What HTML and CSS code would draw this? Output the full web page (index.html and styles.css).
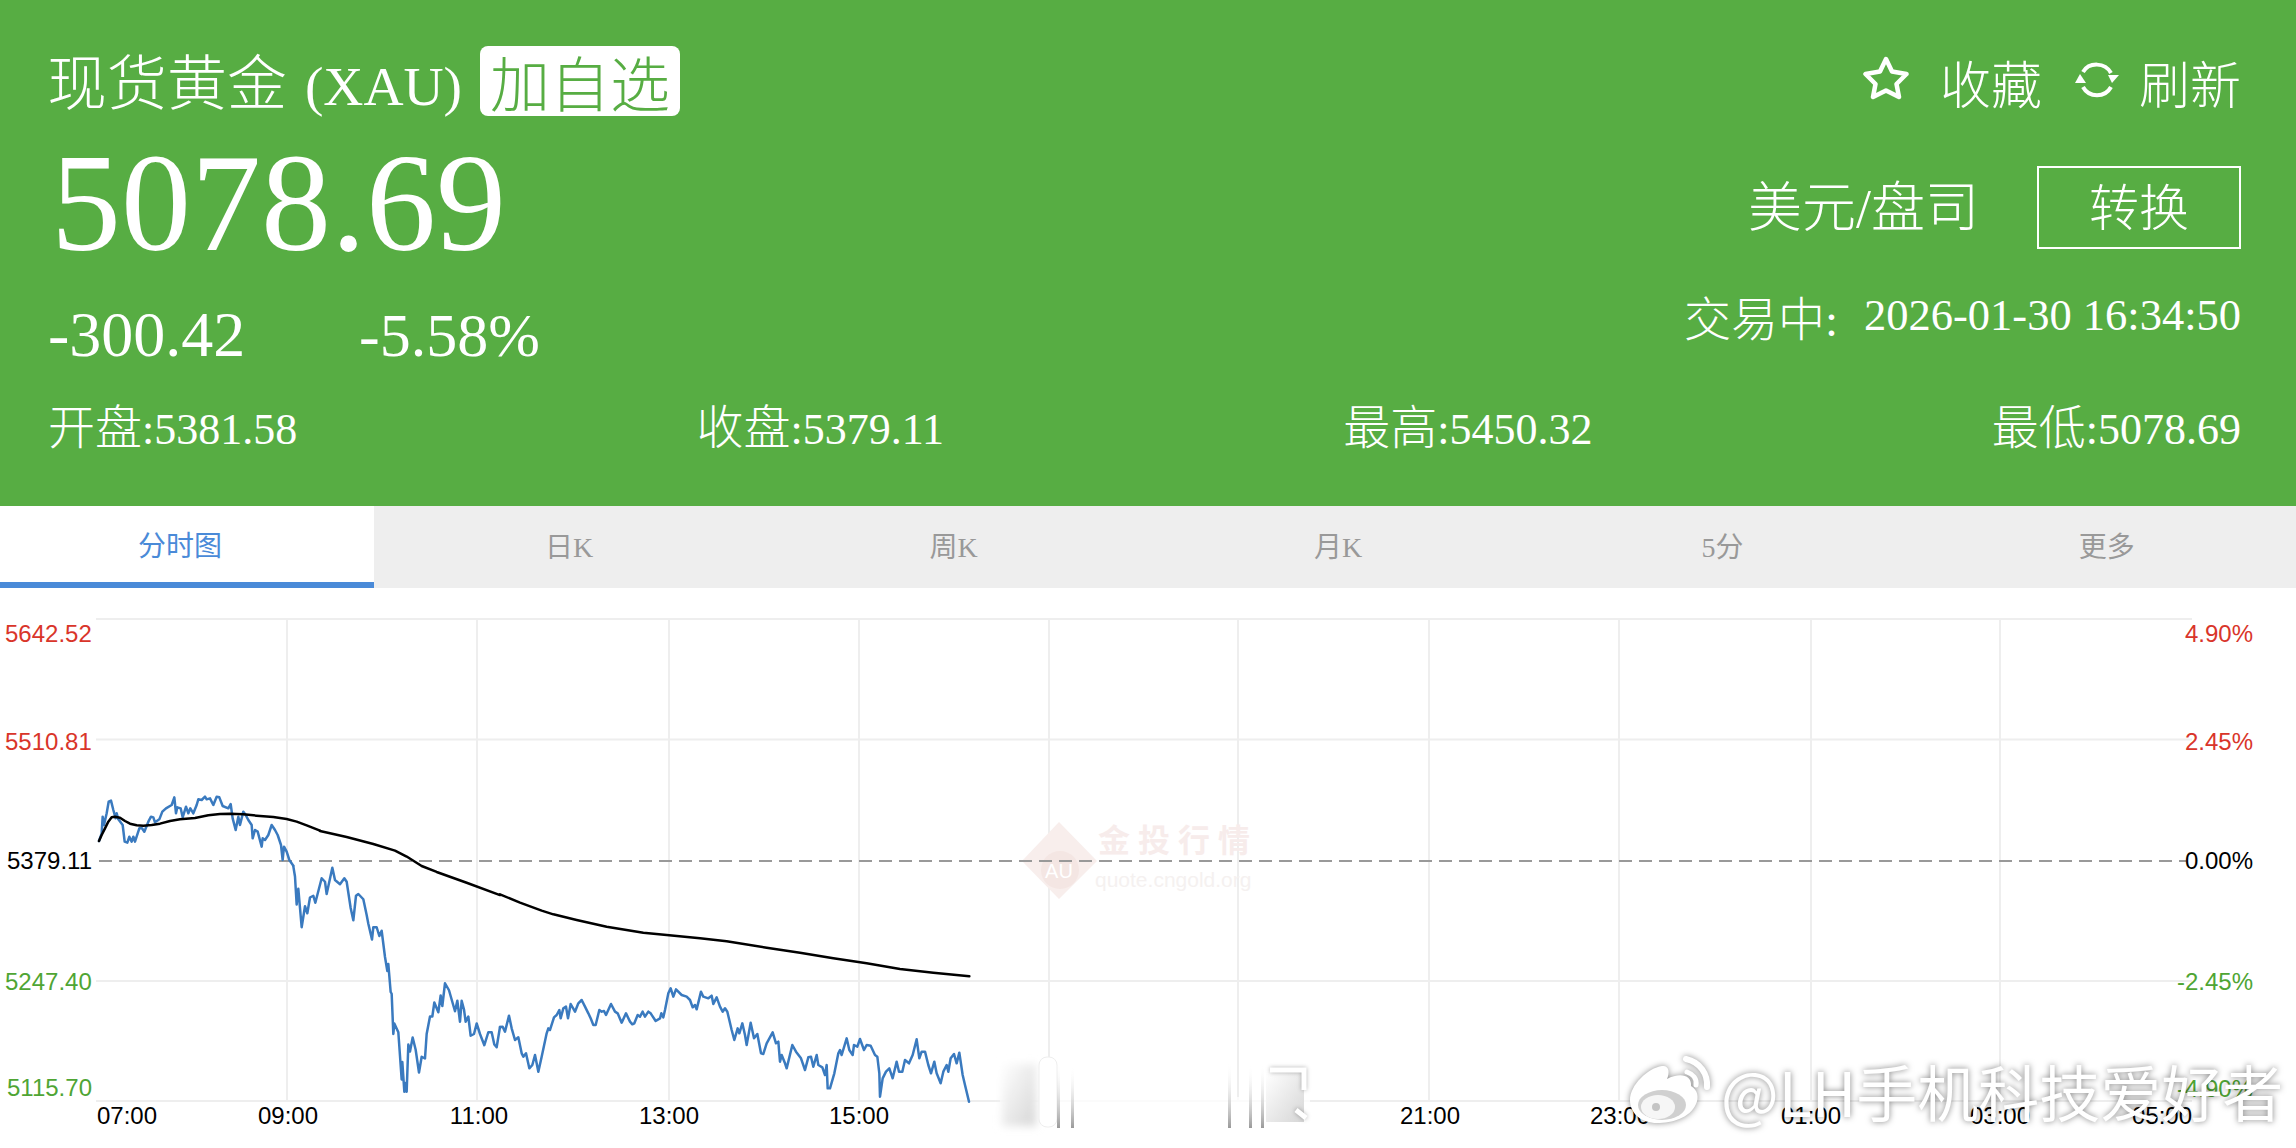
FILE: index.html
```html
<!DOCTYPE html>
<html lang="zh-CN">
<head>
<meta charset="utf-8">
<title>现货黄金 (XAU)</title>
<link rel="stylesheet" href="styles.css">
</head>
<body>
<header class="quote">
  <div class="quote-top">
    <div class="quote-left">
      <div class="title-row">
        <h1 class="title"><span class="zh">现货黄金</span> (XAU)</h1>
        <button class="add-btn">加自选</button>
      </div>
      <div class="price">5078.69</div>
      <div class="change"><span class="change-abs">-300.42</span><span>-5.58%</span></div>
    </div>
    <div class="quote-right">
      <div class="actions">
        <svg class="icon-star" width="48" height="44" viewBox="0 0 48 44"><path d="M24 3 L30 15.500 L44.500 18 L34.500 28 L37 41 L24 34.500 L11 41 L13.500 28 L3.500 18 L18 15.500 Z"/></svg>
        <span class="action-text">收藏</span>
        <svg class="icon-refresh" width="44" height="40" viewBox="0 0 44 40"><path class="arc" d="M8 12 C14 2 30 2 36 13"/><path class="arc" d="M36 27 C30 38 14 38 8 27"/><path class="head" d="M33 15 L44 15 L37 23 Z"/><path class="head" d="M0 23 L11 23 L5 14 Z"/></svg>
        <span class="action-text refresh-text">刷新</span>
      </div>
      <div class="unit-row">
        <span class="unit">美元/盘司</span>
        <button class="convert-btn">转换</button>
      </div>
      <div class="status"><span class="status-zh">交易中:</span><span>2026-01-30 16:34:50</span></div>
    </div>
  </div>
  <div class="stats">
    <div class="stat"><span class="zh">开盘</span>:5381.58</div>
    <div class="stat"><span class="zh">收盘</span>:5379.11</div>
    <div class="stat"><span class="zh">最高</span>:5450.32</div>
    <div class="stat"><span class="zh">最低</span>:5078.69</div>
  </div>
</header>

<nav class="tabs">
  <div class="tab tab-active">分时图</div>
  <div class="tab">日K</div>
  <div class="tab">周K</div>
  <div class="tab">月K</div>
  <div class="tab">5分</div>
  <div class="tab">更多</div>
</nav>

<section class="chart">
<svg class="chart-svg" width="2296" height="560" viewBox="0 588 2296 560">
  <defs>
    <linearGradient id="smearUp" x1="0" y1="0" x2="0" y2="1"><stop offset="0" stop-color="#fff" stop-opacity="0"/><stop offset="1" stop-color="#9a9a9a"/></linearGradient>
    <linearGradient id="smearBlob" x1="0" y1="0" x2="1" y2="1"><stop offset="0" stop-color="#fff"/><stop offset="1" stop-color="#d6d6d6"/></linearGradient>
    <filter id="soft" x="-30%" y="-30%" width="160%" height="160%"><feGaussianBlur stdDeviation="4"/></filter>
  </defs>

  <path class="grid" d="M96 619H2192M96 739.500H2192M96 981H2192M96 1101H2192"/>
  <path class="grid" d="M287 619V1101M477 619V1101M669 619V1101M859 619V1101M1049 619V1101M1238 619V1101M1429 619V1101M1619 619V1101M1811 619V1101M2000 619V1101"/>

  <g class="mark">
    <path class="mark-diamond" d="M1059 822 L1097 861 L1059 899 L1022 861 Z"/>
    <circle class="mark-circle" cx="1060" cy="870" r="19"/>
    <text class="mark-au" x="1059" y="878" text-anchor="middle">AU</text>
    <text class="mark-zh" x="1098" y="852">金投行情</text>
    <text class="mark-url" x="1095" y="887">quote.cngold.org</text>
  </g>

  <path class="dash" d="M99 861H2186"/>

  <text class="axis red" x="5" y="642">5642.52</text>
  <text class="axis red" x="5" y="750">5510.81</text>
  <text class="axis black" x="7" y="869">5379.11</text>
  <text class="axis green" x="5" y="990">5247.40</text>
  <text class="axis green" x="7" y="1096">5115.70</text>

  <text class="axis red end" x="2253" y="642">4.90%</text>
  <text class="axis red end" x="2253" y="750">2.45%</text>
  <text class="axis black end" x="2253" y="869">0.00%</text>
  <text class="axis green end" x="2253" y="990">-2.45%</text>
  <text class="axis green end" x="2253" y="1097">-4.90%</text>

  <text class="axis black mid" x="127" y="1124">07:00</text>
  <text class="axis black mid" x="288" y="1124">09:00</text>
  <text class="axis black mid" x="479" y="1124">11:00</text>
  <text class="axis black mid" x="669" y="1124">13:00</text>
  <text class="axis black mid" x="859" y="1124">15:00</text>
  <text class="axis black mid" x="1430" y="1124">21:00</text>
  <text class="axis black mid" x="1620" y="1124">23:00</text>
  <text class="axis black mid" x="1811" y="1124">01:00</text>
  <text class="axis black mid" x="2000" y="1124">03:00</text>
  <text class="axis black mid" x="2162" y="1124">05:00</text>

  <g transform="translate(80,780) scale(.33333)">
    <polyline class="line-blue" points="57,183 65,160 68,110 72,135 80,100 86,65 93,62 100,90 107,115 110,100 115,118 128,135 134,185 142,188 148,170 155,185 160,170 165,185 178,145 186,145 193,155 205,125 213,110 220,112 225,127 238,118 247,95 258,85 275,75 283,52 288,100 292,82 302,85 308,112 318,80 325,100 331,85 340,100 350,75 355,58 365,60 375,50 380,58 390,55 400,75 410,50 418,52 428,78 445,85 452,72 458,115 467,150 475,110 480,135 490,95 497,105 505,120 515,135 518,175 525,150 533,155 545,200 548,175 555,180 565,165 575,135 585,150 593,165 603,195 608,240 612,200 620,215 628,240 640,257"/>
  </g>
  <g transform="translate(0,600) scale(.33333,.35)">
    <polyline class="line-blue" points="880,761 885,790 890,870 895,825 905,935 915,875 922,895 930,850 940,845 946,865 965,795 975,805 980,840 997,765 1005,800 1020,812 1033,795 1040,805 1052,880 1060,915 1068,845 1075,840 1090,855 1100,900 1105,925 1116,970 1120,935 1130,935 1138,960 1145,945 1155,1020 1162,1060 1165,1040 1172,1120 1175,1125 1180,1240 1183,1210 1195,1235 1205,1370 1207,1320 1213,1405 1217,1380 1220,1405 1225,1270 1230,1290 1238,1250 1247,1285 1257,1350 1265,1305 1275,1310 1280,1240 1290,1190 1297,1190 1303,1150 1315,1178 1322,1130 1327,1160 1335,1095 1347,1115 1365,1175 1372,1145 1380,1205 1385,1145 1392,1170 1397,1205 1405,1190 1412,1245 1422,1240 1430,1210 1440,1240 1453,1272 1465,1235 1475,1235 1483,1270 1490,1278 1500,1220"/>
  </g>
  <g transform="translate(500,780) scale(.33333)">
    <polyline class="line-blue" points="0,741 8,740 15,755 27,707 35,745 45,780 55,772 65,820 70,830 78,820 88,865 97,855 105,825 110,850 115,875 125,830 140,760 145,745 150,750 162,712 170,705 178,690 182,715 190,685 198,680 204,715 212,672 225,695 235,670 245,660 255,680 265,700 272,715 280,735 287,735 298,690 305,695 312,693 318,705 333,672 345,695 353,700 365,728 378,700 390,725 397,733 403,730 413,705 420,710 428,695 435,710 445,695 452,700 467,723 480,715 484,700 490,712 495,690 505,640 512,625 520,650 528,628 545,645 560,650 570,660 578,682 585,675 590,688 603,635 610,650 625,655 635,647 640,672 650,652 660,680 668,695 675,685 682,695 695,750 703,780 713,745 718,760 727,730 735,765 740,795 752,728 762,775 772,762 783,820 790,822 800,790 818,757 828,790 835,785 840,845 845,825 855,850 860,865 877,795 888,815 903,835 915,870 925,832 933,830 940,860 950,825 955,855 967,862 975,885 980,855 983,925 990,925 1003,880 1015,820 1020,810 1025,825 1040,775 1048,810 1058,825 1062,795 1072,800 1080,777 1092,810 1100,795 1112,797 1125,825 1132,830 1138,880 1140,950 1148,895 1158,875 1168,865 1178,895 1190,845 1197,875 1207,875 1215,840 1227,850 1238,825 1250,778 1258,835 1265,815 1275,815 1285,855 1293,880 1303,845 1310,880 1322,910 1330,875 1340,855 1345,875 1352,835 1362,822 1370,850 1378,818 1388,885 1395,915 1407,965"/>
  </g>

  <g transform="translate(80,780) scale(.33333)">
    <polyline class="line-black" points="57,183 65,165 75,145 85,125 95,112 105,110 120,113 135,123 150,131 170,136 190,137 215,135 240,131 270,123 300,118 345,114 385,106 420,102 450,101 490,103 530,107 580,111 620,117 650,125 680,136 720,152"/>
  </g>
  <g transform="translate(0,600) scale(.33333,.35)">
    <polyline class="line-black" points="960,660 1040,677 1120,697 1185,716 1220,733 1265,760 1310,777 1400,808 1500,843"/>
  </g>
  <g transform="translate(500,780) scale(.33333)">
    <polyline class="line-black" points="0,343 60,368 125,392 160,403 230,420 320,440 430,458 500,465 600,475 680,484 800,503 900,518 1000,535 1100,550 1200,567 1300,578 1408,589"/>
  </g>

  <g class="smear">
    <rect class="smear-wash" x="1000" y="1097" width="310" height="8"/>
    <rect x="1002" y="1064" width="34" height="62" fill="url(#smearBlob)" filter="url(#soft)"/>
    <rect class="smear-white" x="1039" y="1057" width="18" height="70" rx="8"/>
    <rect x="1057" y="1062" width="3" height="66" fill="url(#smearUp)"/>
    <rect x="1071" y="1066" width="3" height="62" fill="url(#smearUp)"/>
    <rect x="1228" y="1062" width="3" height="66" fill="url(#smearUp)"/>
    <rect x="1249" y="1064" width="3" height="64" fill="url(#smearUp)"/>
    <rect x="1261" y="1064" width="3" height="64" fill="url(#smearUp)"/>
    <rect x="1266" y="1072" width="38" height="50" fill="url(#smearBlob)"/>
    <path class="smear-stroke" d="M1270 1070H1304V1090M1296 1110L1306 1118"/>
  </g>

  <g class="weibo">
    <path class="weibo-body" d="M1630 1100 C1630 1085 1648 1068 1662 1066 C1669 1065 1670 1072 1667 1079 C1680 1072 1692 1075 1691 1086 C1698 1090 1699 1098 1696 1104 C1690 1118 1672 1123 1657 1123 C1642 1123 1630 1114 1630 1100 Z"/>
    <ellipse class="weibo-eye" cx="1662" cy="1105" rx="24" ry="15"/>
    <ellipse class="weibo-eye-in" cx="1658" cy="1107" rx="17" ry="12"/>
    <circle class="weibo-pupil" cx="1656" cy="1107" r="4"/>
    <path class="weibo-arc" d="M1686 1059 C1700 1062 1708 1074 1707 1087"/>
    <path class="weibo-arc-in" d="M1687 1072 C1693 1074 1697 1079 1696 1085"/>
  </g>
  <text class="weibo-text" x="1721" y="1117">@LH手机科技爱好者</text>
</svg>
</section>
</body>
</html>
```
FILE: styles.css
```css
* { box-sizing: border-box; }
html, body { margin: 0; padding: 0; }
body {
  width: 2296px;
  height: 1148px;
  overflow: hidden;
  background: #fff;
  font-family: "Liberation Serif", "Noto Sans CJK SC", serif;
}

/* header */
.quote {
  height: 506px;
  background: #57ad43;
  color: #fff;
  padding: 46px 55px 0 50px;
}
.quote-top { display: flex; justify-content: space-between; }
.title-row { display: flex; align-items: center; height: 70px; }
.title {
  margin: 10px 0 0 -3px;
  font-size: 55.500px;
  font-weight: 400;
  line-height: 70px;
  white-space: nowrap;
}
.zh { font-weight: 300; }
.title .zh { font-size: 60px; margin-right: 4px; }
.add-btn {
  width: 200px;
  height: 70px;
  margin-left: 18px;
  padding: 0;
  border: 0;
  border-radius: 8px;
  background: #fff;
  color: #57ad43;
  font-family: "Noto Sans CJK SC", sans-serif;
  font-size: 60px;
  font-weight: 300;
  line-height: 70px;
}
.price {
  margin-top: 17px;
  margin-left: 1px;
  height: 140px;
  font-size: 140px;
  line-height: 140px;
}
.change {
  display: flex;
  align-items: center;
  margin-top: 27px;
  margin-left: -2px;
  font-size: 62px;
  line-height: 70px;
}
.change-abs { width: 311px; font-size: 64px; }

.quote-right { display: flex; flex-direction: column; align-items: flex-end; }
.actions { display: flex; align-items: center; height: 70px; margin-top: 1px; font-size: 51px; font-family: "Noto Sans CJK SC", sans-serif; font-weight: 300; }
.icon-star { fill: none; stroke: #fff; stroke-width: 4.500; stroke-linejoin: round; margin-right: 30px; margin-top: -8px; }
.icon-refresh { margin: -5px 20px 0 33px; }
.icon-refresh .arc { fill: none; stroke: #fff; stroke-width: 4; }
.icon-refresh .head { fill: #fff; }
.unit-row { display: flex; align-items: center; height: 83px; margin-top: 49px; }
.unit { font-size: 54px; font-weight: 300; margin-right: 58px; padding-bottom: 8px; }
.convert-btn {
  width: 204px;
  height: 83px;
  padding: 0 0 8px;
  border: 2px solid #fff;
  background: transparent;
  color: #fff;
  font-family: "Noto Sans CJK SC", sans-serif;
  font-size: 50px;
  font-weight: 300;
}
.status { display: flex; align-items: center; height: 60px; margin-top: 36px; font-size: 44.500px; }
.status-zh { font-size: 47px; font-weight: 300; margin-right: 26px; }

.stats {
  display: flex;
  justify-content: space-between;
  margin-top: 28px;
  margin-left: -2px;
  font-size: 44px;
  line-height: 60px;
}
.stats .zh { font-size: 47px; }

/* tabs */
.tabs { display: grid; grid-template-columns: 374px repeat(5, 1fr); height: 82px; background: #eee; }
.tab {
  display: flex;
  align-items: center;
  justify-content: center;
  padding-left: 6px;
  padding-bottom: 4px;
  color: #999;
  font-size: 28px;
}
.tab-active {
  padding-left: 0;
  padding-right: 14px;
  background: #fff;
  border-bottom: 6px solid #4a8ad8;
  padding-bottom: 0;
  color: #4a8ad8;
}

/* chart */
.chart { height: 560px; }
.chart-svg { display: block; }
.grid { fill: none; stroke: #eee; stroke-width: 2; }
.dash { fill: none; stroke: #999; stroke-width: 2; stroke-dasharray: 13 7; }
.axis { font-family: "Liberation Sans", sans-serif; font-size: 24px; }
.end { text-anchor: end; }
.mid { text-anchor: middle; }
.red { fill: #d9352a; }
.green { fill: #4fa534; }
.black { fill: #000; }
.line-blue { fill: none; stroke: #3a7abf; stroke-width: 2.500; stroke-linejoin: round; stroke-linecap: round; vector-effect: non-scaling-stroke; }
.line-black { fill: none; stroke: #000; stroke-width: 2.500; stroke-linejoin: round; stroke-linecap: round; vector-effect: non-scaling-stroke; }

.mark-diamond { fill: #f8eeec; }
.mark-circle { fill: #f4e6e3; }
.mark-au { fill: #fff; font-family: "Liberation Sans", sans-serif; font-size: 20px; }
.mark-zh { fill: #f7eceb; font-family: "Noto Sans CJK SC", sans-serif; font-size: 32px; font-weight: 700; letter-spacing: 8px; }
.mark-url { fill: #f5f1f0; font-family: "Liberation Sans", sans-serif; font-size: 21px; }

.smear-wash { fill: #fff; opacity: .75; }
.smear-white { fill: #fff; stroke: #eee; stroke-width: 1; }
.smear-stroke { fill: none; stroke: #fff; stroke-width: 5; filter: drop-shadow(0 0 2px rgba(0,0,0,.3)); }

.weibo { filter: drop-shadow(0 0 3px rgba(0,0,0,.45)); }
.weibo-body { fill: #fff; }
.weibo-eye { fill: #d0d0d0; }
.weibo-eye-in { fill: #f6f6f6; }
.weibo-pupil { fill: #c4c4c4; }
.weibo-arc { fill: none; stroke: #fff; stroke-width: 6; stroke-linecap: round; }
.weibo-arc-in { fill: none; stroke: #fff; stroke-width: 5; stroke-linecap: round; }
.weibo-text {
  fill: #fff;
  font-family: "Noto Sans CJK SC", sans-serif;
  font-size: 61px;
  font-weight: 400;
  filter: drop-shadow(0 0 3px rgba(0,0,0,.5));
}
```
